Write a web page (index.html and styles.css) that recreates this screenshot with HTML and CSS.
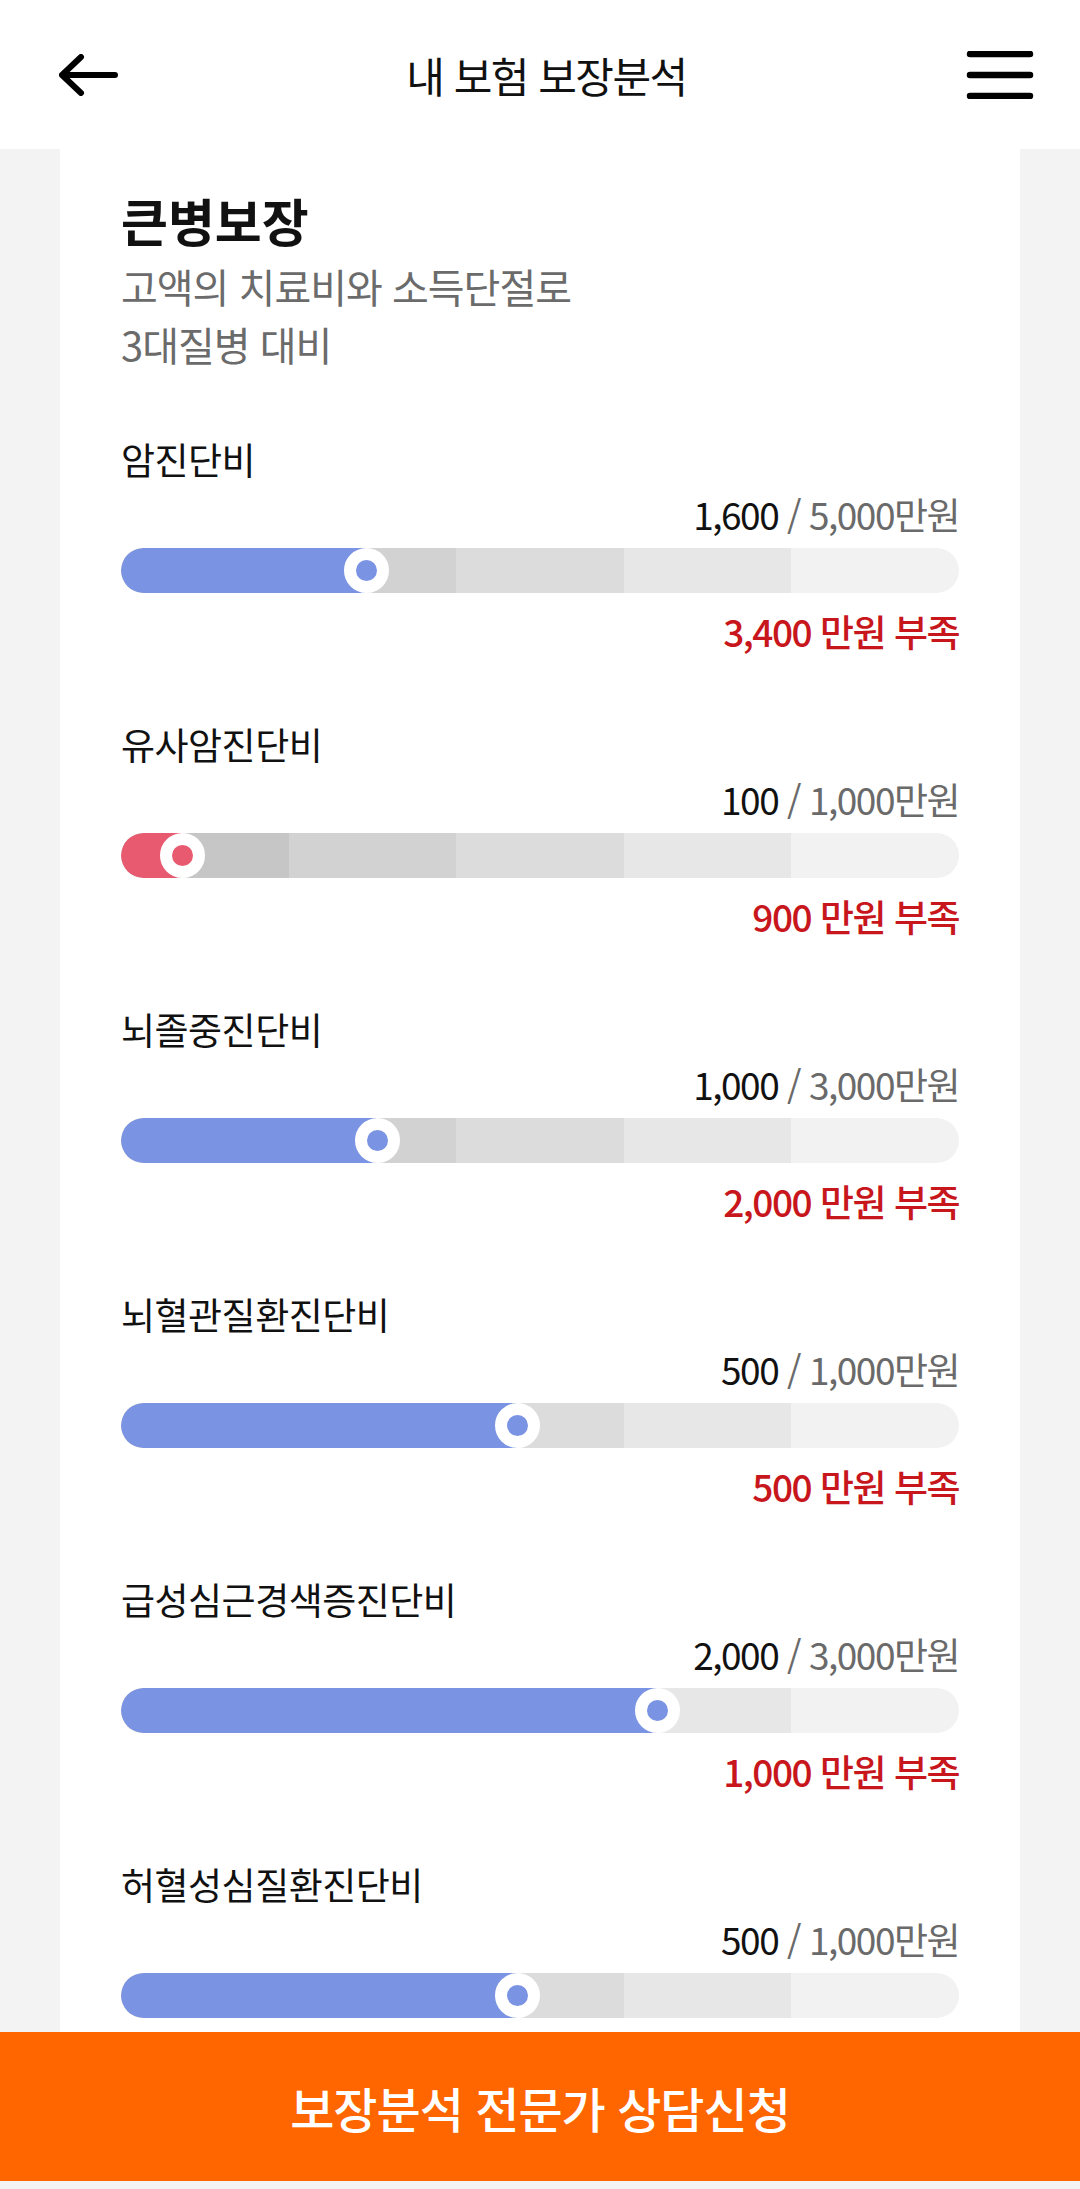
FILE: index.html
```html
<!DOCTYPE html>
<html lang="ko">
<head>
  <meta charset="UTF-8">
  <title>내 보험 보장분석</title>
  <link rel="stylesheet" href="styles.css">
</head>
<body>

  <header class="topbar">
    <button class="icon-btn back" aria-label="뒤로">
      <svg width="60" height="42" viewBox="0 0 60 42">
        <path d="M3 21 H56 M22 3 L3 21 L22 39" fill="none" stroke="#000" stroke-width="6" stroke-linecap="round" stroke-linejoin="round"/>
      </svg>
    </button>
    <h1>내 보험 보장분석</h1>
    <button class="icon-btn menu" aria-label="메뉴">
      <svg width="68" height="48" viewBox="0 0 68 48">
        <path d="M4 3 H64 M4 24 H64 M4 45 H64" fill="none" stroke="#000" stroke-width="6.5" stroke-linecap="round"/>
      </svg>
    </button>
  </header>

  <main class="scroll">
    <section class="card">
      <h2>큰병보장</h2>
      <p class="desc">고액의 치료비와 소득단절로<br>3대질병 대비</p>
      <div id="coverage-list">
        <!-- items are injected here -->
      </div>
    </section>
  </main>

  <footer class="cta">
    <button>보장분석 전문가 상담신청</button>
  </footer>

  <script>
    const coverages = [
      { name: "암진단비", have: 1600, need: 5000 },
      { name: "유사암진단비", have: 100, need: 1000 },
      { name: "뇌졸중진단비", have: 1000, need: 3000 },
      { name: "뇌혈관질환진단비", have: 500, need: 1000 },
      { name: "급성심근경색증진단비", have: 2000, need: 3000 },
      { name: "허혈성심질환진단비", have: 500, need: 1000 },
    ];

    function won(n) {
      return n.toLocaleString('en-US');
    }

    function loadCoverages() {
      const list = document.getElementById('coverage-list');
      coverages.forEach(item => {
        const pct = item.have / item.need * 100;
        const div = document.createElement('div');
        div.className = 'item' + (pct < 20 ? ' low' : '');
        div.innerHTML = `
          <div class="label">${item.name}</div>
          <div class="value"><b>${won(item.have)}</b> / ${won(item.need)}만원</div>
          <div class="track">
            <span></span><span></span><span></span><span></span><span></span>
            <div class="fill" style="width:calc(${pct}% - 22px)"><i class="thumb"></i></div>
          </div>
          <div class="deficit">${won(item.need - item.have)} 만원 부족</div>
        `;
        list.appendChild(div);
      });
    }

    loadCoverages();
  </script>

</body>
</html>
```

FILE: styles.css
```css
html, body {
  height: 100%;
}

body {
  margin: 0;
  display: flex;
  flex-direction: column;
  background: #f3f3f3;
  font-family: "Noto Sans CJK KR", "Noto Sans", sans-serif;
  color: #111;
}

.topbar {
  flex-shrink: 0;
  height: 149px;
  display: grid;
  grid-template-columns: 1fr auto 1fr;
  align-items: center;
  padding: 0 46px 0 59px;
  background: #fff;
}

.topbar h1 {
  margin: 0;
  font-size: 42px;
  font-weight: 400;
  letter-spacing: -1.5px;
}

.icon-btn {
  background: none;
  border: none;
  padding: 0;
  display: flex;
  cursor: pointer;
}

.back {
  justify-self: start;
}

.menu {
  justify-self: end;
}

.scroll {
  flex: 1;
  min-height: 0;
  overflow-y: auto;
  scrollbar-width: none;
}

.card {
  margin: 0 60px;
  padding: 40px 61px 60px;
  background: #fff;
}

.card h2 {
  margin: 0;
  font-size: 51px;
  line-height: 62px;
  font-weight: 700;
  letter-spacing: 0;
}

.desc {
  margin: 6px 0 0;
  font-size: 40px;
  line-height: 58px;
  color: #6b6b6b;
  letter-spacing: -1px;
}

#coverage-list {
  margin-top: 61px;
}

.item {
  padding-bottom: 63px;
}

.label {
  font-size: 37px;
  line-height: 50px;
  letter-spacing: -0.5px;
}

.value {
  margin-top: 5px;
  font-size: 37px;
  line-height: 50px;
  text-align: right;
  color: #6a6a6a;
  letter-spacing: -1.5px;
}

.value b {
  font-weight: 400;
  color: #111;
}

.track {
  position: relative;
  margin-top: 9px;
  height: 45px;
  border-radius: 23px;
  overflow: hidden;
  display: flex;
}

.track span {
  flex: 1;
}

.track span:nth-child(1) { background: #c6c6c6; }
.track span:nth-child(2) { background: #d2d2d2; }
.track span:nth-child(3) { background: #dcdcdc; }
.track span:nth-child(4) { background: #e7e7e7; }
.track span:nth-child(5) { background: #f2f2f2; }

.fill {
  position: absolute;
  left: 0;
  top: 0;
  bottom: 0;
  background: #7a93e3;
  border-radius: 23px 0 0 23px;
}

.thumb {
  position: absolute;
  right: -22px;
  top: 0;
  width: 21px;
  height: 21px;
  border: 12px solid #fff;
  border-radius: 50%;
  background: #7a93e3;
}

.low .fill,
.low .thumb {
  background: #e85a70;
}

.deficit {
  margin-top: 13px;
  font-size: 37px;
  line-height: 50px;
  font-weight: 500;
  text-align: right;
  color: #c8161d;
  letter-spacing: -1.5px;
}

.cta {
  flex-shrink: 0;
  padding-bottom: 8px;
  background: #f3f3f3;
}

.cta button {
  width: 100%;
  height: 149px;
  border: none;
  background: #ff6600;
  color: #fff;
  font-family: inherit;
  font-size: 48px;
  font-weight: 500;
  letter-spacing: -1px;
  cursor: pointer;
}
```
